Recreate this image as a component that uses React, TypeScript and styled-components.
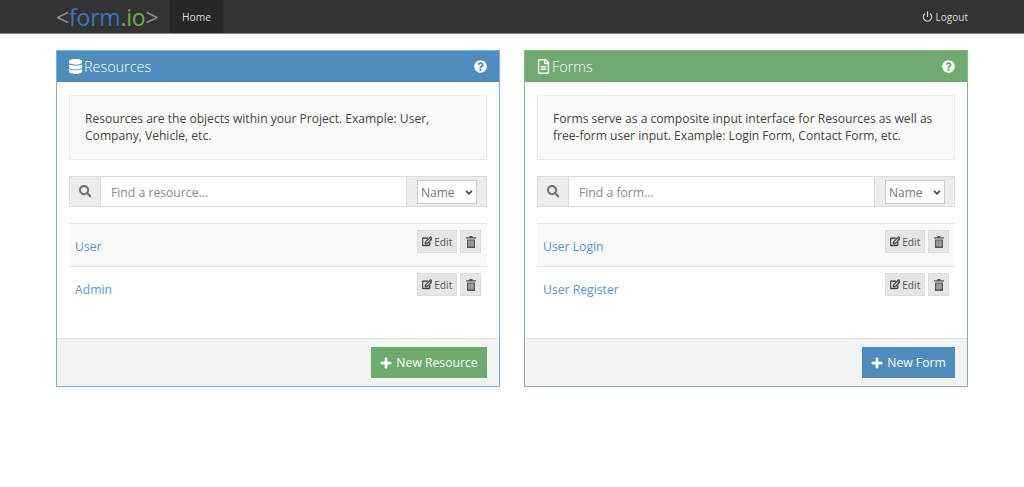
import React from "react";
import styled, { createGlobalStyle } from "styled-components";
import { FaDatabase, FaRegFileAlt, FaSearch, FaRegEdit, FaPlus, FaQuestionCircle } from "react-icons/fa";
import { Power } from "lucide-react";

const Global = createGlobalStyle`
  html, body { margin: 0; padding: 0; background: #fff; }
  body { font-family: "Open Sans", "Liberation Sans", sans-serif; font-size: 13px; color: #333; }
  * { box-sizing: border-box; }
`;

const Navbar = styled.header`
  height: 34px;
  background: #333;
  border-bottom: 1px solid #858585;
  padding: 0 56px;
  display: flex;
  align-items: stretch;
`;
const Logo = styled.div`
  width: 114px;
  display: flex;
  align-items: center;
  font-size: 23px;
  line-height: 30px;
  letter-spacing: -0.2px;
  white-space: nowrap;
`;
const LogoBracket = styled.span`color: #909090;`;
const LogoBlue = styled.span`color: #3f74b8;`;
const LogoGreen = styled.span`color: #6cae3e;`;
const HomeTab = styled.div`
  width: 53px;
  background: #272727;
  color: #ddd;
  font-size: 10.2px;
  display: flex;
  align-items: center;
  justify-content: center;
`;
const Logout = styled.div`
  margin-left: auto;
  display: flex;
  align-items: center;
  gap: 3px;
  color: #ddd;
  font-size: 10px;
`;

const Main = styled.main`
  padding: 16px 56px 0;
  display: grid;
  grid-template-columns: 444px 444px;
  column-gap: 24px;
`;
const Panel = styled.section<{ $color: string }>`
  height: 337px;
  border: 1px solid ${(p) => p.$color};
  display: flex;
  flex-direction: column;
`;
const Heading = styled.div<{ $color: string }>`
  height: 31px;
  flex: none;
  background: ${(p) => p.$color};
  color: #fff;
  padding: 0 12px 0 11px;
  display: flex;
  align-items: center;
  font-size: 14.4px;
  font-weight: 300;
`;
const HeadIcon = styled.span`
  display: flex;
  margin-right: 1px;
  font-size: 15px;
`;
const Help = styled.span`
  margin-left: auto;
  display: flex;
  font-size: 13px;
`;
const Body = styled.div`
  flex: 1;
  padding: 13px 12px 0;
`;
const Well = styled.div`
  height: 65px;
  background: #f9f9f9;
  border: 1px solid #ebebeb;
  padding: 14px 15px;
  font-size: 12.1px;
  line-height: 17px;
  color: #444;
`;
const SearchGroup = styled.div`
  margin-top: 16px;
  height: 31px;
  display: flex;
  border: 1px solid #dcdcdc;
  background: #ececec;
`;
const SearchAddon = styled.div`
  width: 31px;
  flex: none;
  display: flex;
  align-items: center;
  justify-content: center;
  color: #707070;
  font-size: 12.5px;
  border-right: 1px solid #dcdcdc;
`;
const SearchInput = styled.div`
  flex: 1;
  background: #fff;
  color: #888;
  font-size: 12.2px;
  padding: 1px 10px 0;
  display: flex;
  align-items: center;
  border-right: 1px solid #dcdcdc;
`;
const SortAddon = styled.div`
  width: 79px;
  flex: none;
  display: flex;
  align-items: center;
  justify-content: flex-end;
  padding-right: 9px;
`;
const SortBox = styled.div`
  width: 60px;
  height: 24px;
  background: #fff;
  border: 1px solid #ccc;
  color: #777;
  font-size: 12px;
  padding: 1px 3px 0;
  display: flex;
  align-items: center;
  justify-content: space-between;
`;
const List = styled.div`
  margin-top: 16px;
`;
const Row = styled.div<{ $shaded?: boolean }>`
  height: 43px;
  border-top: 1px solid #e4e4e4;
  background: ${(p) => (p.$shaded ? "#f9f9f9" : "#fff")};
  padding: 6px 6px 0;
  display: flex;
  justify-content: space-between;
  align-items: flex-start;
`;
const ItemLink = styled.a`
  color: #5a96c6;
  font-size: 12.2px;
  line-height: 33px;
`;
const Actions = styled.div`
  display: flex;
  gap: 3px;
`;
const SmallButton = styled.div<{ $w: number }>`
  width: ${(p) => p.$w}px;
  height: 23px;
  background: #e6e6e6;
  border: 1px solid #dcdcdc;
  color: #555;
  font-size: 10.2px;
  display: flex;
  align-items: center;
  justify-content: center;
  gap: 2px;
`;
const EditGlyph = styled(FaRegEdit)`
  font-size: 10.5px;
  color: #444;
  path { stroke: currentColor; stroke-width: 30; }
`;
const PlusGlyph = styled(FaPlus)`
  font-size: 12px;
  path { stroke: currentColor; stroke-width: 20; }
`;
const Footer = styled.div`
  height: 48px;
  flex: none;
  background: #f3f3f3;
  border-top: 1px solid #e4e4e4;
  padding: 8px 12px 0;
  display: flex;
  justify-content: flex-end;
  align-items: flex-start;
`;
const PrimaryButton = styled.div<{ $color: string; $w: number }>`
  width: ${(p) => p.$w}px;
  height: 31px;
  background: ${(p) => p.$color};
  color: #fff;
  font-size: 12.2px;
  display: flex;
  align-items: center;
  justify-content: center;
  gap: 4px;
`;
const Chevron = () => (
  <svg width="8" height="5" viewBox="0 0 9 6" fill="none" stroke="#444" strokeWidth="2">
    <path d="M1 1l3.5 3.5L8 1" />
  </svg>
);
const TrashIcon = () => (
  <svg width="10" height="12" viewBox="0 0 10 12">
    <path fill="#555" d="M3.4 0h3.2v1.2H10v1.3H0V1.2h3.4zM1 3.4h8V12H1zM2.6 4.6v6h.9v-6zm2 0v6h.9v-6zm1.9 0v6h.9v-6z" fillRule="evenodd" />
  </svg>
);

type CardProps = {
  color: string; border: string; footerColor: string;
  icon: React.ReactNode; title: string; text: React.ReactNode; placeholder: string;
  items: string[]; newLabel: string; newWidth: number;
};

const Card = ({ color, border, footerColor, icon, title, text, placeholder, items, newLabel, newWidth }: CardProps) => (
  <Panel $color={border}>
    <Heading $color={color}>
      <HeadIcon>{icon}</HeadIcon>
      {title}
      <Help><FaQuestionCircle /></Help>
    </Heading>
    <Body>
      <Well>{text}</Well>
      <SearchGroup>
        <SearchAddon><FaSearch /></SearchAddon>
        <SearchInput>{placeholder}</SearchInput>
        <SortAddon><SortBox>Name<Chevron /></SortBox></SortAddon>
      </SearchGroup>
      <List>
        {items.map((item, i) => (
          <Row key={item} $shaded={i === 0}>
            <ItemLink>{item}</ItemLink>
            <Actions>
              <SmallButton $w={40}><EditGlyph />Edit</SmallButton>
              <SmallButton $w={21}><TrashIcon /></SmallButton>
            </Actions>
          </Row>
        ))}
      </List>
    </Body>
    <Footer>
      <PrimaryButton $color={footerColor} $w={newWidth}><PlusGlyph />{newLabel}</PrimaryButton>
    </Footer>
  </Panel>
);

export default function App() {
  return (
    <>
      <Global />
      <Navbar>
        <Logo>
          <LogoBracket>&lt;</LogoBracket>
          <LogoBlue>form</LogoBlue>
          <LogoBracket>.</LogoBracket>
          <LogoGreen>io</LogoGreen>
          <LogoBracket>&gt;</LogoBracket>
        </Logo>
        <HomeTab>Home</HomeTab>
        <Logout><Power size={11} strokeWidth={2.6} />Logout</Logout>
      </Navbar>
      <Main>
        <Card
          color="#4d8cbb" border="#7eaedb" footerColor="#6dab6d"
          icon={<FaDatabase />} title="Resources"
          text={<>Resources are the objects within your Project. Example: User,<br />Company, Vehicle, etc.</>}
          placeholder="Find a resource..." items={["User", "Admin"]}
          newLabel="New Resource" newWidth={116}
        />
        <Card
          color="#6fab6f" border="#85b885" footerColor="#4d8cbb"
          icon={<FaRegFileAlt />} title="Forms"
          text={<>Forms serve as a composite input interface for Resources as well as<br />free-form user input. Example: Login Form, Contact Form, etc.</>}
          placeholder="Find a form..." items={["User Login", "User Register"]}
          newLabel="New Form" newWidth={93}
        />
      </Main>
    </>
  );
}
